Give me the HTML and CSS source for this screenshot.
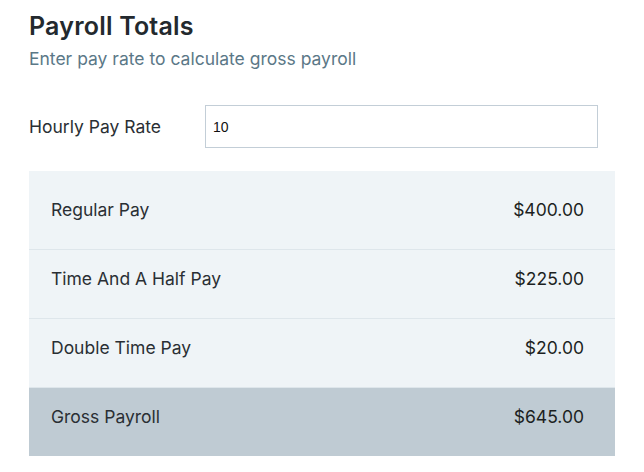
FILE: index.html
```html
<!DOCTYPE html>
<html>
<head>
<meta charset="utf-8">
<link rel="stylesheet" href="styles.css">
</head>
<body>
<div class="page">
  <h1 class="title">Payroll Totals</h1>
  <p class="subtitle">Enter pay rate to calculate gross payroll</p>
  <div class="rate-row">
    <label class="rate-label" for="rate">Hourly Pay Rate</label>
    <input class="rate-input" id="rate" type="text" value="10">
  </div>
  <div class="totals">
    <div class="row"><span>Regular Pay</span><span>$400.00</span></div>
    <div class="row"><span>Time And A Half Pay</span><span>$225.00</span></div>
    <div class="row"><span>Double Time Pay</span><span>$20.00</span></div>
    <div class="row total"><span>Gross Payroll</span><span>$645.00</span></div>
  </div>
</div>
</body>
</html>
```
FILE: styles.css
```css
html, body {
  margin: 0;
  padding: 0;
  background: #ffffff;
}
.page {
  padding: 11px 29px 0 29px;
  font-family: Inter, "Noto Sans", sans-serif;
  color: #262b30;
}
.title {
  margin: 0;
  font-size: 25px;
  line-height: 30px;
  font-weight: 600;
  letter-spacing: 0.2px;
  color: #23292e;
}
.subtitle {
  margin: 7px 0 0 0;
  font-size: 17.5px;
  line-height: 22px;
  color: #5b7887;
}
.rate-row {
  display: flex;
  align-items: center;
  margin-top: 35px;
}
.rate-label {
  width: 176px;
  font-size: 17.5px;
  line-height: 22px;
  color: #2a2f34;
}
.rate-input {
  box-sizing: border-box;
  width: 393px;
  height: 43px;
  margin: 0;
  border: 1px solid #c3ced7;
  border-radius: 0;
  padding: 0 7px;
  font-family: "Liberation Sans", Arial, sans-serif;
  font-size: 14px;
  color: #111;
  background: #fff;
  outline: none;
}
.totals {
  margin-top: 23px;
  background: #eff4f7;
  padding-top: 10px;
}
.row {
  display: flex;
  justify-content: space-between;
  padding: 17px 31px 27px 22px;
  font-size: 17.5px;
  line-height: 24px;
  color: #2a2f34;
  border-bottom: 1px solid #dee6eb;
}
.row span:last-child {
  color: #1c1f22;
}
.row.total {
  background: #bfcbd3;
  border-bottom: none;
}
```
